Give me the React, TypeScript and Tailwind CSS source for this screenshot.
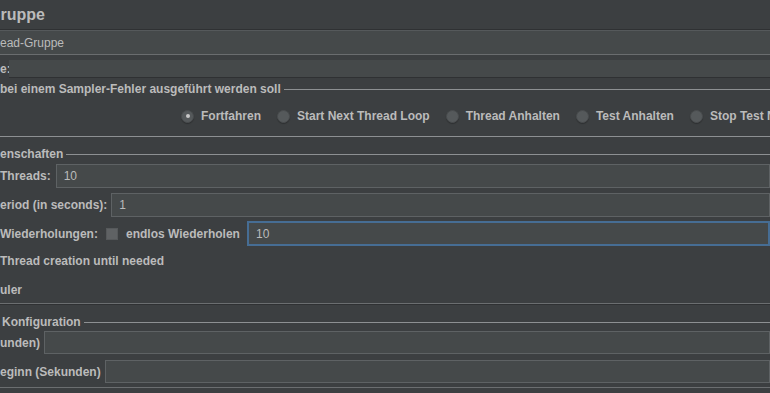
import React from "react";

const font = "font-['Liberation_Sans',Arial,sans-serif]";

function Field({ value = "", focused = false, className = "" }: { value?: string; focused?: boolean; className?: string }) {
  return (
    <div
      className={`flex-1 flex items-center h-full px-[7px] text-[12px] text-[#bbbbbb] bg-[#45494a] ${
        focused ? "border-2 border-[#466d94] px-[6px]" : "border border-[#5e6264]"
      } ${className}`}
    >
      {value}
    </div>
  );
}

function Legend({ text, lineClass = "" }: { text: string; lineClass?: string }) {
  return (
    <div className="flex items-center gap-[3px]">
      <span className="font-bold text-[12px] text-[#bbbbbb] whitespace-nowrap">{text}</span>
      <div className={`flex-1 h-px bg-[#8d9092] ${lineClass}`} />
    </div>
  );
}

function Radio({ label, checked = false }: { label: string; checked?: boolean }) {
  return (
    <div className="flex items-center gap-[7px]">
      <span className="w-[13px] h-[13px] rounded-full bg-[#55595b] border border-[#4a4d4f] flex items-center justify-center shadow-[0_1px_1px_rgba(0,0,0,0.25)]">
        {checked && <span className="w-[4px] h-[4px] rounded-full bg-[#c8c8c8]" />}
      </span>
      <span className="font-bold text-[12px] text-[#bbbbbb] whitespace-nowrap">{label}</span>
    </div>
  );
}

export default function App() {
  return (
    <div className={`w-[770px] h-[393px] overflow-hidden bg-[#3c3f41] ${font} flex flex-col`}>
      {/* title */}
      <div className="h-[29px] flex items-center shrink-0">
        <span className="font-bold text-[16px] text-[#bbbbbb] ml-[-12px]">Gruppe</span>
      </div>
      <div className="h-px bg-[#2f3133] shrink-0" />
      {/* name */}
      <div className="h-[25px] shrink-0 flex">
        <div className="flex-1 flex items-center bg-[#45494a] border-t border-[#55595b] border-b border-b-[#6a6d6f] text-[12px] text-[#bbbbbb]">
          ead-Gruppe
        </div>
      </div>
      {/* comments */}
      <div className="h-[18px] mt-[5px] shrink-0 flex items-center">
        <span className="font-bold text-[12px] text-[#bbbbbb] w-[9px] shrink-0 whitespace-nowrap">e:</span>
        <div className="flex-1 h-full bg-[#45494a] border-b border-[#2f3133]" />
      </div>
      {/* error action group */}
      <div className="mt-[2px] shrink-0 h-[15px]">
        <Legend text="bei einem Sampler-Fehler ausgeführt werden soll" />
      </div>
      <div className="h-[42px] shrink-0 flex items-center pl-[181px] gap-[16px] whitespace-nowrap">
        <Radio label="Fortfahren" checked />
        <Radio label="Start Next Thread Loop" />
        <Radio label="Thread Anhalten" />
        <Radio label="Test Anhalten" />
        <Radio label="Stop Test Now" />
      </div>
      <div className="h-px bg-[#8d9092] shrink-0 mt-[-1px]" />
      {/* thread properties */}
      <div className="mt-[8px] h-[15px] shrink-0">
        <Legend text="enschaften" lineClass="bg-[#6b6e70]" />
      </div>
      <div className="mt-[4px] h-[24px] shrink-0 flex items-center gap-[5px]">
        <span className="font-bold text-[12px] text-[#bbbbbb] whitespace-nowrap">Threads:</span>
        <Field value="10" />
      </div>
      <div className="mt-[5px] h-[24px] shrink-0 flex items-center gap-[4px]">
        <span className="font-bold text-[12px] text-[#bbbbbb] whitespace-nowrap">eriod (in seconds):</span>
        <Field value="1" />
      </div>
      <div className="mt-[4px] h-[25px] shrink-0 flex items-center">
        <span className="font-bold text-[12px] text-[#bbbbbb] whitespace-nowrap w-[106px]">Wiederholungen:</span>
        <span className="w-[12px] h-[12px] bg-[#5f6264] border border-[#56595b] shrink-0" />
        <span className="font-bold text-[12px] text-[#bbbbbb] whitespace-nowrap ml-[8px] w-[121px]">endlos Wiederholen</span>
        <Field value="10" focused />
      </div>
      <div className="h-[29px] shrink-0 flex items-center">
        <span className="font-bold text-[12px] text-[#bbbbbb] whitespace-nowrap">Thread creation until needed</span>
      </div>
      <div className="h-[29px] shrink-0 flex items-center">
        <span className="font-bold text-[12px] text-[#bbbbbb] whitespace-nowrap">uler</span>
      </div>
      <div className="h-px bg-[#6b6e70] shrink-0 mt-[-1px]" />
      <div className="h-px bg-[#2f3133] shrink-0" />
      {/* scheduler config */}
      <div className="mt-[8px] h-[15px] shrink-0 pl-[2px]">
        <Legend text="Konfiguration" lineClass="bg-[#6b6e70]" />
      </div>
      <div className="mt-[3px] h-[23px] shrink-0 flex items-center gap-[4px]">
        <span className="font-bold text-[12px] text-[#bbbbbb] whitespace-nowrap">unden)</span>
        <Field />
      </div>
      <div className="mt-[6px] h-[23px] shrink-0 flex items-center gap-[4px]">
        <span className="font-bold text-[12px] text-[#bbbbbb] whitespace-nowrap">eginn (Sekunden)</span>
        <Field />
      </div>
      <div className="mt-[4px] h-px bg-[#6b6e70] shrink-0" />
    </div>
  );
}
